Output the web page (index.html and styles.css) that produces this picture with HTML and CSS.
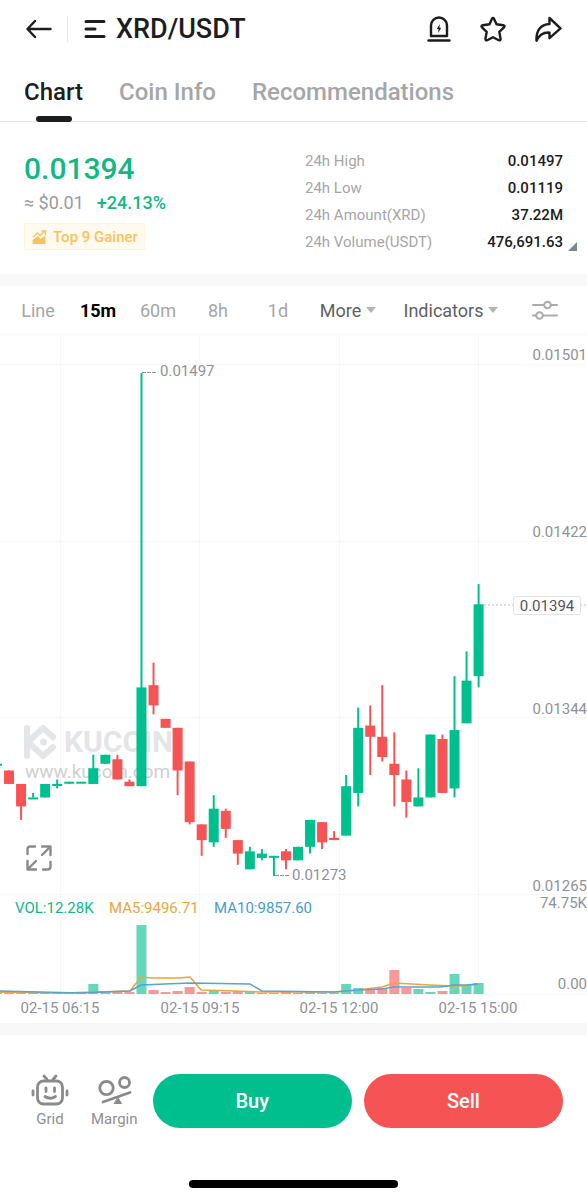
FILE: index.html
```
<!DOCTYPE html>
<html lang="en">
<head>
  <meta charset="UTF-8">
  <meta name="viewport" content="width=device-width, initial-scale=1.0">
  <title>XRD/USDT</title>
  <link rel="stylesheet" href="styles.css">
</head>
<body>
<header class="top-bar">
  <button class="icon-btn back" aria-label="Back">
    <svg width="26" height="20" viewBox="0 0 26 20" fill="none" stroke="#1d1d1d" stroke-width="2.4" stroke-linecap="round" stroke-linejoin="round"><path d="M24.5 10H1.5M9 2L1.5 10L9 18"/></svg>
  </button>
  <button class="pair">
    <svg width="22" height="20" viewBox="0 0 22 20" fill="none" stroke="#1d1d1d" stroke-width="3" stroke-linecap="round"><path d="M2 2.500H20M2 10H11M2 17.500H20"/></svg>
    <h1>XRD/USDT</h1>
  </button>
  <div class="actions">
    <button class="icon-btn" aria-label="Price alert">
      <svg width="26" height="28" viewBox="0 0 26 28" fill="none" stroke="#1d1d1d" stroke-width="2.4" stroke-linecap="round" stroke-linejoin="round"><path d="M5 21V10.500A8 8 0 0 1 21 10.500V21Z"/><path d="M2.500 25.500H23.500"/><path d="M13.700 9L10.800 14H12.500L12.200 18L15.200 12.800H13.500Z" fill="#1d1d1d" stroke="none"/></svg>
    </button>
    <button class="icon-btn" aria-label="Add to favorites">
      <svg width="26" height="28" viewBox="0 0 26 28" fill="none" stroke="#1d1d1d" stroke-width="2.4" stroke-linejoin="round"><path d="M12 3.700Q13 2.300 14 3.700L16.500 9.200L23.300 10.200Q25.300 10.800 24 12.300L19.300 16.800L20.600 24Q20.500 25.900 18.800 25.200L13 22.300L7.200 25.200Q5.500 25.900 5.400 24L6.700 16.800L2 12.300Q.7 10.800 2.700 10.200L9.500 9.200Z"/></svg>
    </button>
    <button class="icon-btn" aria-label="Share">
      <svg width="28" height="28" viewBox="0 0 28 28" fill="none" stroke="#1d1d1d" stroke-width="2.4" stroke-linejoin="round"><path d="M15.500 3L26.500 13.300L15.500 23.200V17.600C9.500 17.200 5.200 20 2.500 25.700C2 16 6.500 9.300 15.500 9Z"/></svg>
    </button>
  </div>
</header>

<nav class="tabs">
  <a class="tab active" href="#chart">Chart</a>
  <a class="tab" href="#info">Coin Info</a>
  <a class="tab" href="#recommendations">Recommendations</a>
</nav>

<main>
  <section class="summary">
    <div class="quote">
      <div class="price">0.01394</div>
      <div class="change"><span class="fiat">≈ $0.01</span><span class="up">+24.13%</span></div>
      <a class="badge" href="#ranking">
        <svg width="15" height="14" viewBox="0 0 15 14"><path d="M1 7L5.500 3L8 5.500L12.500 1.500M9.500 1H13.500V5" fill="none" stroke="#f7c35c" stroke-width="1.4"/><path d="M.5 10L5.500 6L8.500 9L13.500 5.500V14H.5Z" fill="#f7c35c"/></svg>
        Top 9 Gainer
      </a>
    </div>
    <dl class="stats">
      <div><dt>24h High</dt><dd>0.01497</dd></div>
      <div><dt>24h Low</dt><dd>0.01119</dd></div>
      <div><dt>24h Amount(XRD)</dt><dd>37.22M</dd></div>
      <div><dt>24h Volume(USDT)</dt><dd class="expand">476,691.63</dd></div>
    </dl>
  </section>

  <section class="chart-panel" id="chart">
    <div class="intervals">
      <button>Line</button>
      <button class="selected">15m</button>
      <button>60m</button>
      <button>8h</button>
      <button>1d</button>
      <button class="menu" aria-haspopup="true">More</button>
      <button class="menu" aria-haspopup="true">Indicators</button>
      <button aria-label="Chart settings">
        <svg width="26" height="20" viewBox="0 0 26 20" fill="none" stroke="#ababab" stroke-width="2" stroke-linecap="round"><path d="M1 5H12M19 5H25M1 15.500H4M11 15.500H25"/><circle cx="15.500" cy="5" r="3.300"/><circle cx="7.500" cy="15.500" r="3.300"/></svg>
      </button>
    </div>
    <div class="chart-wrap">
      <svg class="chart" viewBox="0 0 587 689" role="img" aria-label="XRD/USDT 15 minute candles">
        <path class="grid" d="M0 .5H587M0 30.500H587M0 207.500H587M0 383.500H587M0 560.500H587M0 660.500H587M60.500 0V660M199.500 0V660M339.500 0V660M478.500 0V660"/>
        <g class="watermark">
          <path d="M27 394V422M28 408L43 394L53 403M28 408L43 422L53 413" fill="none" stroke="#e4e5e8" stroke-width="6" stroke-linecap="round" stroke-linejoin="round"/>
          <circle cx="43.500" cy="408" r="3.500" fill="#e4e5e8"/>
          <text class="brand" x="64" y="418">KUCOIN</text>
          <text class="site" x="25" y="444">www.kucoin.com</text>
        </g>
        <g id="candles"></g>
        <g id="volumes"></g>
        <polyline class="ma5" points="0,658 60,659 95,658 130,657 141,643 153,644 178,644 190,643 201,656 235,657 262,658 334,658 347,657 358,656 382,653 394,649 430,651 454,652 466,652 478,650"/>
        <polyline class="ma10" points="0,657 80,659 130,657 141,651 165,650 190,649 250,650 262,657 334,658 358,656 382,655 394,653 440,653 454,651 466,651 478,650"/>
        <path class="leader" d="M142 38.500H157M275 541.500H290"/>
        <text x="160" y="42">0.01497</text>
        <text x="292" y="546">0.01273</text>
        <path class="last-line" d="M484 271H587"/>
        <rect class="last-box" x="513.500" y="262.500" width="67" height="18" rx="2"/>
        <text class="last" x="547" y="277">0.01394</text>
        <g class="axis-y">
          <text x="587" y="26">0.01501</text>
          <text x="587" y="203">0.01422</text>
          <text x="587" y="380">0.01344</text>
          <text x="587" y="557">0.01265</text>
          <text x="587" y="574">74.75K</text>
          <text x="587" y="655">0.00</text>
        </g>
        <text class="vol" x="15" y="579">VOL:12.28K</text>
        <text class="ma5-label" x="109" y="579">MA5:9496.71</text>
        <text class="ma10-label" x="214" y="579">MA10:9857.60</text>
        <g class="axis-x">
          <text x="60" y="679">02-15 06:15</text>
          <text x="200" y="679">02-15 09:15</text>
          <text x="339" y="679">02-15 12:00</text>
          <text x="478" y="679">02-15 15:00</text>
        </g>
      </svg>
      <button class="fullscreen" aria-label="Full screen">
        <svg width="26" height="26" viewBox="0 0 26 26" fill="none" stroke="#8a8a8a" stroke-width="2.4" stroke-linecap="round" stroke-linejoin="round"><path d="M1.500 9V4.500Q1.500 1.500 4.500 1.500H9M16 1.500H24.500V10M24 2L16 10M1.500 16V24.500H10M2 24L10 16M24.500 17V21.500Q24.500 24.500 21.500 24.500H17"/></svg>
      </button>
    </div>
  </section>
</main>

<footer class="trade-bar">
  <div class="trade-row">
    <a class="tool" href="#grid">
      <svg width="38" height="32" viewBox="0 0 38 32" fill="none" stroke="#8a8a8a" stroke-width="2.8" stroke-linecap="round"><rect x="6.500" y="7" width="25" height="23" rx="6"/><path d="M13 2L16 5.500M25 2L22 5.500M2 17V21M36 17V21M15 14V17.500M23.500 14V17.500M14 22.500Q19 26 24.500 22.500"/></svg>
      <span>Grid</span>
    </a>
    <a class="tool" href="#margin">
      <svg width="38" height="32" viewBox="0 0 38 32" fill="none" stroke="#8a8a8a" stroke-width="2.8" stroke-linecap="round"><circle cx="11.500" cy="14" r="6.700"/><circle cx="29.500" cy="8.500" r="5"/><path d="M8 28L35 18.500"/><path d="M23 24L26.500 29.500H19.500Z" fill="#8a8a8a" stroke-width="1"/></svg>
      <span>Margin</span>
    </a>
    <button class="trade buy">Buy</button>
    <button class="trade sell">Sell</button>
  </div>
  <div class="home-indicator"></div>
</footer>
<script src="chart.js"></script>
</body>
</html>
```
FILE: styles.css
```
* {
  box-sizing: border-box;
}
body {
  font-family: Roboto, "Liberation Sans", sans-serif;
  background-color: #fff;
  color: #1d1d1d;
  margin: 0;
  min-height: 100vh;
  display: flex;
  flex-direction: column;
}
button {
  font: inherit;
  color: inherit;
  background: none;
  border: 0;
  padding: 0;
}
a {
  text-decoration: none;
}
svg {
  display: block;
}

.top-bar {
  display: flex;
  align-items: center;
  height: 58px;
  padding: 0 25px 0 26px;
}
.back {
  padding-right: 15px;
}
.pair {
  display: flex;
  align-items: center;
  gap: 10px;
  padding-left: 16px;
  height: 26px;
  border-left: 1px solid #e6e6e6;
}
.pair h1 {
  margin: 0;
  font-size: 27px;
  line-height: 26px;
  font-weight: 500;
}
.actions {
  display: flex;
  gap: 28px;
  margin-left: auto;
}

.tabs {
  display: flex;
  gap: 36px;
  height: 64px;
  padding: 0 24px;
  border-bottom: 1px solid #e8e8e8;
}
.tab {
  position: relative;
  padding-top: 20px;
  font-size: 24px;
  line-height: 28px;
  font-weight: 500;
  color: #a6a6a6;
}
.tab.active {
  color: #1d1d1d;
}
.tab.active::after {
  content: "";
  position: absolute;
  left: 50%;
  bottom: -1px;
  width: 36px;
  height: 6px;
  margin-left: -18px;
  border-radius: 3px;
  background-color: #1d1d1d;
}

.summary {
  display: flex;
  justify-content: space-between;
  padding: 26px 24px 18px;
  border-bottom: 12px solid #f8f8f8;
}
.price {
  font-size: 30px;
  line-height: 42px;
  font-weight: 500;
  color: #12b886;
}
.change {
  display: flex;
  gap: 13px;
  font-size: 18px;
  line-height: 26px;
  margin-bottom: 7px;
}
.fiat {
  color: #9b9b9b;
}
.up {
  font-weight: 500;
  color: #12b886;
}
.badge {
  display: flex;
  width: fit-content;
  align-items: center;
  gap: 6px;
  height: 27px;
  padding: 0 6px 0 7px;
  border: 1px solid #fff3dc;
  background-color: #fffaf0;
  font-size: 15px;
  font-weight: 500;
  color: #f7c35c;
}
.stats {
  width: 258px;
  margin: 0;
}
.stats div {
  display: flex;
  justify-content: space-between;
  font-size: 15px;
  line-height: 27px;
}
.stats dt {
  color: #a6a6a6;
}
.stats dd {
  position: relative;
  margin: 0;
  font-weight: 500;
}
.expand::after {
  content: "";
  position: absolute;
  right: -14px;
  bottom: 5px;
  border-left: 9px solid transparent;
  border-bottom: 9px solid #7b8794;
}

.chart-panel {
  border-bottom: 12px solid #f8f8f8;
}
.intervals {
  display: grid;
  grid-template-columns: repeat(5, 60fr) 80fr 126fr 62fr;
  height: 48px;
  padding: 0 11px 0 8px;
  font-size: 18px;
  color: #a6a6a6;
}
.intervals button {
  display: flex;
  align-items: center;
  justify-content: center;
}
.intervals .selected {
  font-weight: 700;
  color: #000;
}
.intervals .menu {
  gap: 5px;
  color: #5f5f5f;
}
.menu::after {
  content: "";
  border: 5px solid transparent;
  border-top: 6px solid #b5b5b5;
  border-bottom: 0;
}

.chart-wrap {
  position: relative;
}
.chart {
  width: 100%;
  height: auto;
  font-size: 15px;
}
.chart text {
  fill: #8f9296;
}
.grid {
  stroke: #f7f7f7;
}
.chart .brand {
  font-size: 30px;
  font-weight: 700;
  fill: #e4e5e8;
}
.chart .site {
  font-size: 19px;
  fill: #d0d0d0;
}
.green {
  fill: #00bf8f;
  stroke: #00bf8f;
}
.red {
  fill: #f65454;
  stroke: #f65454;
}
#candles rect,
#volumes rect {
  stroke: none;
}
#candles line {
  stroke-width: 2;
}
#volumes {
  opacity: 0.6;
}
.ma5,
.ma10 {
  fill: none;
  stroke-width: 1.5;
}
.ma5 {
  stroke: #eba43f;
}
.ma10 {
  stroke: #5aa3d0;
}
.leader {
  stroke: #8f9296;
  stroke-dasharray: 4 1;
}
.last-line {
  stroke: #c4c4c4;
  stroke-dasharray: 2 2;
}
.last-box {
  fill: #fff;
  stroke: #e2e2e2;
}
.chart .last {
  fill: #555;
  text-anchor: middle;
}
.axis-y {
  text-anchor: end;
}
.axis-x {
  text-anchor: middle;
}
.chart .vol {
  fill: #12b886;
}
.chart .ma5-label {
  fill: #eba43f;
}
.chart .ma10-label {
  fill: #469dd0;
}
.fullscreen {
  position: absolute;
  left: 26px;
  bottom: 152px;
}

.trade-bar {
  flex: 1;
  display: flex;
  flex-direction: column;
  justify-content: space-between;
  padding: 39px 0 12px;
}
.trade-row {
  display: flex;
  align-items: flex-start;
  padding: 0 24px 0 31px;
}
.tool {
  display: flex;
  flex-direction: column;
  align-items: center;
  gap: 4px;
  margin-right: 22px;
  font-size: 15px;
  line-height: 18px;
  color: #8f8f8f;
}
.tool + .tool {
  margin-right: 15px;
}
.trade {
  flex: 1;
  height: 54px;
  border-radius: 27px;
  font-size: 20px;
  font-weight: 500;
  color: #fff;
}
.buy {
  background-color: #00bf8f;
  margin-right: 12px;
}
.sell {
  background-color: #f65454;
}
.home-indicator {
  align-self: center;
  width: 209px;
  height: 8px;
  border-radius: 4px;
  background-color: #000;
}
```
FILE: chart.js
```
// [open, close, high, low, volume], prices in 0.00001 USDT
const candles = [
  [1323, 1323, 1323, 1323, 2],
  [1320, 1314, 1320, 1314, 2],
  [1314, 1304, 1314, 1298, 2],
  [1308, 1308, 1310, 1308, 1],
  [1308, 1314, 1314, 1308, 1],
  [1314, 1314, 1316, 1312, 1],
  [1315, 1315, 1315, 1314, 1],
  [1315, 1315, 1315, 1315, 1],
  [1314, 1321, 1327, 1314, 10],
  [1323, 1327, 1327, 1323, 2],
  [1325, 1316, 1327, 1316, 2],
  [1315, 1313, 1316, 1313, 2],
  [1313, 1357, 1497, 1313, 69],
  [1358, 1349, 1368, 1345, 4],
  [1343, 1339, 1343, 1339, 2],
  [1339, 1320, 1339, 1309, 3],
  [1324, 1297, 1324, 1296, 7],
  [1296, 1289, 1296, 1282, 2],
  [1288, 1303, 1309, 1286, 3],
  [1302, 1294, 1303, 1290, 2],
  [1289, 1283, 1289, 1278, 3],
  [1276, 1284, 1286, 1276, 2],
  [1281, 1283, 1285, 1280, 1],
  [1282, 1282, 1282, 1273, 1],
  [1284, 1280, 1285, 1276, 2],
  [1280, 1286, 1286, 1280, 1],
  [1286, 1298, 1298, 1283, 2],
  [1297, 1288, 1297, 1285, 1],
  [1290, 1289, 1293, 1289, 1],
  [1291, 1313, 1318, 1291, 10],
  [1310, 1339, 1348, 1304, 6],
  [1340, 1335, 1349, 1318, 4],
  [1335, 1326, 1358, 1324, 6],
  [1323, 1318, 1337, 1304, 24],
  [1316, 1306, 1320, 1299, 6],
  [1304, 1308, 1321, 1304, 5],
  [1308, 1336, 1336, 1308, 2],
  [1334, 1310, 1336, 1310, 3],
  [1312, 1338, 1362, 1308, 20],
  [1341, 1360, 1373, 1341, 8],
  [1362, 1394, 1403, 1357, 11]
];

const priceY = (p) => 30 + (1501 - p) * 530 / 236;

let bodies = "";
let bars = "";
candles.forEach(([open, close, high, low, volume], i) => {
  const x = -3 + i * 12.04;
  const color = close >= open ? "green" : "red";
  const top = priceY(Math.max(open, close));
  const height = Math.max(Math.abs(open - close) * 530 / 236, 2);
  bodies += `<g class="${color}"><line x1="${x}" x2="${x}" y1="${priceY(high)}" y2="${priceY(low)}"/>
    <rect x="${x - 5}" y="${top}" width="10" height="${height}"/></g>`;
  bars += `<rect class="${color}" x="${x - 5}" y="${660 - volume}" width="10" height="${volume}"/>`;
});
document.getElementById("candles").innerHTML = bodies;
document.getElementById("volumes").innerHTML = bars;
```
